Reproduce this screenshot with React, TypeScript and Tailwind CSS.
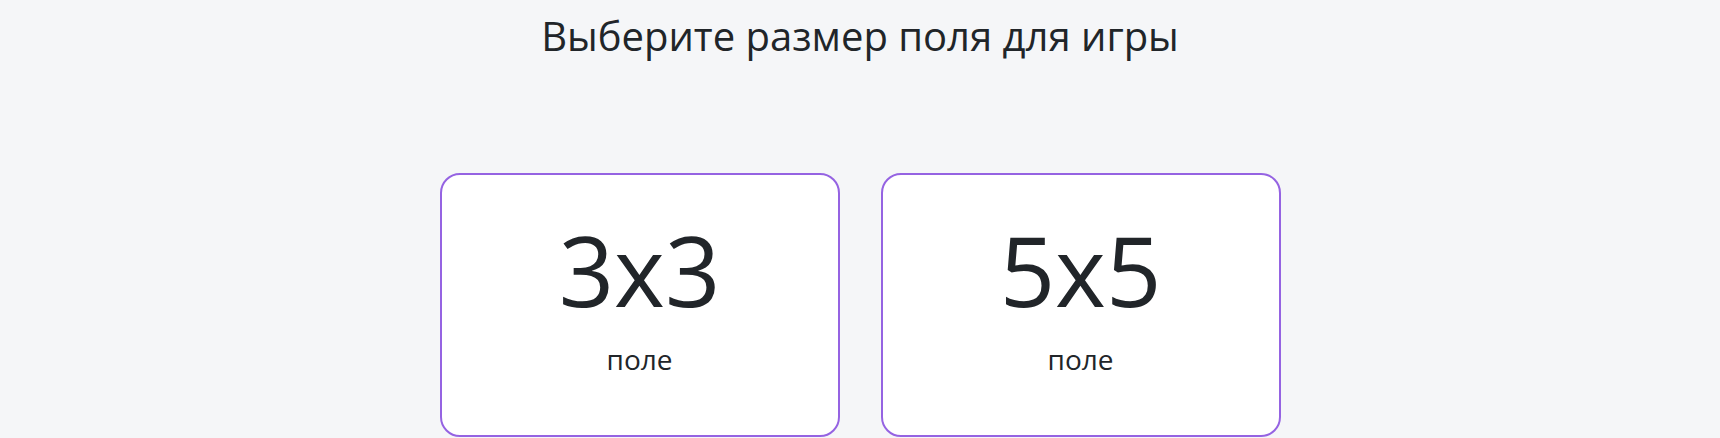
import React from "react";

const sizes = ["3x3", "5x5"];

export default function App() {
  return (
    <div className="min-h-[438px] w-full bg-[#f5f6f8] text-[#212529] [font-family:'Open_Sans',sans-serif] overflow-hidden">
      <h1 className="pt-[12px] text-center text-[40px] leading-[48px] font-normal">
        Выберите размер поля для игры
      </h1>
      <div className="mt-[113px] flex justify-center gap-[41px]">
        {sizes.map((s) => (
          <button
            key={s}
            className="flex h-[264px] w-[400px] flex-col items-center rounded-[20px] border-2 border-[#9563e2] bg-white pt-[37px]"
          >
            <span className="text-[97px] leading-[115px]">{s}</span>
            <span className="mt-[15px] text-[28px] leading-[34px]">поле</span>
          </button>
        ))}
      </div>
    </div>
  );
}
